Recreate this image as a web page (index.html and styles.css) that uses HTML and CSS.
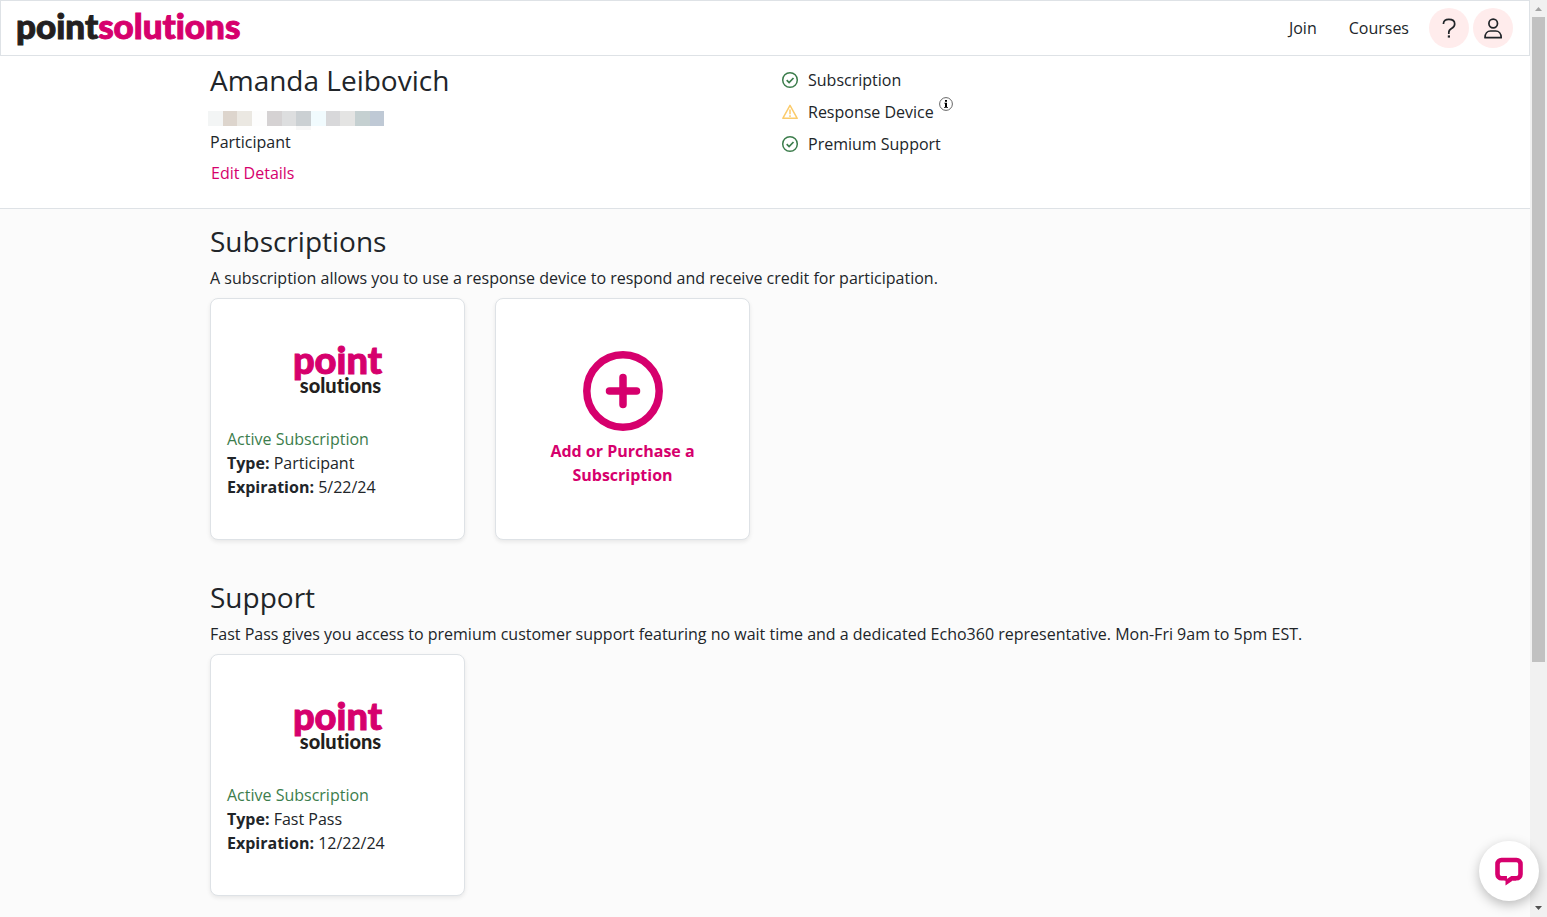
FILE: index.html
```html
<!DOCTYPE html>
<html lang="en">
<head>
<meta charset="utf-8">
<meta name="viewport" content="width=device-width, initial-scale=1">
<title>PointSolutions Account</title>
<link rel="stylesheet" href="styles.css">
</head>
<body>
<div class="page">
  <header class="topbar">
    <a class="brand" href="#"><span>point</span><span class="brand-accent">solutions</span></a>
    <nav class="nav">
      <a class="nav-link" href="#">Join</a>
      <a class="nav-link" href="#">Courses</a>
      <button class="round-btn" type="button" aria-label="Help">
        <svg width="40" height="40" viewBox="0 0 40 40" fill="none" stroke="#212529" stroke-width="1.7"><path d="M14.500 16v-.8c.2-2.500 2-3.900 5.300-3.900 3.500 0 5.900 1.600 5.900 4.600 0 2.200-1.300 3.500-3.200 4.500-1.900 1-2.700 2-2.700 4v1.500"/><path d="M18.800 28.500h2.200" stroke-width="2.200"/></svg>
      </button>
      <button class="round-btn" type="button" aria-label="Account">
        <svg width="40" height="40" viewBox="0 0 40 40" fill="none" stroke="#212529" stroke-width="1.700"><circle cx="20.200" cy="15.500" r="4.300"/><path d="M12 29.700c0-4.300 2.500-6.700 5.500-6.700h5.200c3 0 5.500 2.400 5.500 6.700z" stroke-linejoin="round"/></svg>
      </button>
    </nav>
  </header>

  <section class="profile">
    <div class="container profile-grid">
      <div>
        <h1 class="heading">Amanda Leibovich</h1>
        <div class="redacted">
          <svg width="176" height="25" viewBox="0 0 176 25" shape-rendering="crispEdges" aria-hidden="true">
            <path fill="#f3f5f5" d="M0 6h15v15H0z"/><path fill="#ddd5cd" d="M15 6h14v15H15z"/><path fill="#ebe8e2" d="M29 6h15v15H29z"/><path fill="#fdfdfd" d="M44 6h15v15H44z"/><path fill="#d5d2d3" d="M59 6h15v15H59z"/><path fill="#dddedf" d="M74 6h14v15H74z"/><path fill="#cbd0d3" d="M88 6h15v15H88z"/><path fill="#f1fbfe" d="M103 6h15v15h-15z"/><path fill="#d8d8da" d="M118 6h14v15h-14z"/><path fill="#e4e4e3" d="M132 6h15v15h-15z"/><path fill="#c5d0d1" d="M147 6h15v15h-15z"/><path fill="#bfc9d5" d="M162 6h14v15h-14z"/><path fill="#f7f7f7" d="M88 21h15v4H88z"/>
          </svg>
        </div>
        <p class="text">Participant</p>
        <a class="edit-link" href="#">Edit Details</a>
      </div>
      <ul class="status-list">
        <li class="status">
          <svg class="status-icon" viewBox="0 0 20 20" fill="none" stroke="#3c7d4c" stroke-width="1.500"><circle cx="10" cy="10" r="7.300"/><path d="M6.700 10.200l2.400 2.300 4.400-4.500" stroke-width="1.700"/></svg>
          <span>Subscription</span>
        </li>
        <li class="status">
          <svg class="status-icon" viewBox="0 0 20 20" fill="none" stroke="#fbcb6b" stroke-width="1.500" stroke-linejoin="round"><path d="M10 3.400L17.200 16.300H2.800z"/><path d="M10 7.500v4.700M10 13.300v1.600"/></svg>
          <span>Response Device</span>
          <button class="info" type="button" aria-label="About response devices"><svg width="14" height="14" viewBox="0 0 14 14"><circle cx="7" cy="7" r="6.400" fill="#fff" stroke="#555" stroke-width="0.900"/><path d="M6 3h2v1.700H6zM5.200 5.700H8v4.200h1v.900H5v-.900h1V6.600h-.800z" fill="#000"/></svg></button>
        </li>
        <li class="status">
          <svg class="status-icon" viewBox="0 0 20 20" fill="none" stroke="#3c7d4c" stroke-width="1.500"><circle cx="10" cy="10" r="7.300"/><path d="M6.700 10.200l2.400 2.300 4.400-4.500" stroke-width="1.700"/></svg>
          <span>Premium Support</span>
        </li>
      </ul>
    </div>
  </section>

  <main class="container content">
    <section>
      <h2 class="heading">Subscriptions</h2>
      <p class="text">A subscription allows you to use a response device to respond and receive credit for participation.</p>
      <div class="cards">
        <article class="card">
          <div class="card-logo"><span class="logo-point">point</span><span class="logo-solutions">solutions</span></div>
          <p class="text active">Active Subscription</p>
          <p class="text"><strong>Type:</strong> Participant</p>
          <p class="text"><strong>Expiration:</strong> 5/22/24</p>
        </article>
        <a class="card card-add" href="#">
          <svg width="80" height="80" viewBox="0 0 80 80" fill="none" stroke="#d6006d" stroke-width="7.500" aria-hidden="true"><circle cx="40" cy="40" r="36.200"/><path d="M40 26.500v27M26.500 40h27" stroke-linecap="round"/></svg>
          <span class="add-label">Add or Purchase a Subscription</span>
        </a>
      </div>
    </section>
    <section>
      <h2 class="heading">Support</h2>
      <p class="text">Fast Pass gives you access to premium customer support featuring no wait time and a dedicated Echo360 representative. Mon-Fri 9am to 5pm EST.</p>
      <div class="cards">
        <article class="card">
          <div class="card-logo"><span class="logo-point">point</span><span class="logo-solutions">solutions</span></div>
          <p class="text active">Active Subscription</p>
          <p class="text"><strong>Type:</strong> Fast Pass</p>
          <p class="text"><strong>Expiration:</strong> 12/22/24</p>
        </article>
      </div>
    </section>
  </main>
</div>

<div class="scrollbar" aria-hidden="true">
  <svg class="arrow" viewBox="0 0 17 17"><path d="M5 11h7L8.500 7z" fill="#a3a3a3"/></svg>
  <div class="track"><div class="thumb"></div></div>
  <svg class="arrow" viewBox="0 0 17 17"><path d="M5 6h7l-3.500 4z" fill="#505050"/></svg>
</div>

<button class="chat" type="button" aria-label="Open chat">
  <svg width="30" height="30" viewBox="0 0 30 30" fill="none" stroke="#d6006d" stroke-width="4.600"><path d="M12.800 22.200H7.500a4 4 0 0 1-4-4V8a4 4 0 0 1 4-4h15a4 4 0 0 1 4 4v10.200a4 4 0 0 1-4 4H19"/><path d="M10.500 19.900h2.300v3l4.500-3H22v4.600h-3.200l-7.300 5v-5h-1z" fill="#d6006d" stroke="none"/></svg>
</button>
</body>
</html>
```
FILE: styles.css
```css
* {
  box-sizing: border-box;
}

body {
  margin: 0;
  display: flex;
  min-height: 100vh;
  background: #fbfbfb;
  color: #212529;
  font: 16px/24px "Open Sans", "Noto Sans", sans-serif;
}

h1, h2, p, ul {
  margin: 0;
  padding: 0;
}

a {
  color: inherit;
  text-decoration: none;
}

button {
  border: 0;
  padding: 0;
  cursor: pointer;
}

svg {
  display: block;
}

.page {
  flex: 1;
  min-width: 0;
}

.topbar {
  display: flex;
  align-items: center;
  justify-content: space-between;
  height: 56px;
  padding: 0 16px 0 15px;
  border: 1px solid #dee2e6;
  background: #fff;
}

.brand {
  padding-bottom: 6px;
  font: 900 35px/44px Lato, sans-serif;
  font-variant-ligatures: none;
  -webkit-text-stroke: 1px currentColor;
  color: #231f20;
}

.brand-accent {
  color: #d6006d;
}

.nav {
  display: flex;
  align-items: center;
  gap: 4px;
}

.nav-link {
  padding: 0 16px 0 12px;
}

.round-btn {
  width: 40px;
  height: 40px;
  border-radius: 50%;
  background: #ffecec;
}

.container {
  width: 100%;
  max-width: 1140px;
  margin: 0 auto;
  padding: 0 15px;
}

.profile {
  padding: 8px 0 23px;
  border-bottom: 1px solid #dee2e6;
  background: #fff;
}

.profile-grid {
  display: grid;
  grid-template-columns: 1fr 1fr;
  column-gap: 30px;
}

.heading {
  margin-bottom: 9px;
  font-size: 28px;
  font-weight: 400;
  line-height: 32px;
}

.redacted {
  margin-left: -2px;
}

.edit-link {
  display: inline-block;
  margin-top: 7px;
  padding-left: 1px;
  color: #d6006d;
}

.status-list {
  display: flex;
  flex-direction: column;
  gap: 8px;
  padding-top: 4px;
  list-style: none;
}

.status {
  display: flex;
  align-items: center;
}

.status-icon {
  width: 20px;
  height: 20px;
  margin-right: 8px;
}

.info {
  align-self: flex-start;
  margin: -3px 0 0 5px;
  background: none;
}

.content {
  display: flex;
  flex-direction: column;
  gap: 41px;
  padding-top: 16px;
  padding-bottom: 20px;
}

.cards {
  display: grid;
  grid-template-columns: repeat(auto-fill, minmax(250px, 1fr));
  gap: 30px;
  margin-top: 8px;
}

.card {
  min-height: 242px;
  padding: 44px 16px 40px;
  border: 1px solid #dee2e6;
  border-radius: 8px;
  background: #fff;
  box-shadow: 0 2px 4px rgba(0, 0, 0, 0.08);
}

.card-logo {
  display: flex;
  flex-direction: column;
  align-items: center;
  height: 84px;
  font-family: Lato, sans-serif;
  font-weight: 900;
  font-variant-ligatures: none;
}

.logo-point {
  font-size: 38px;
  line-height: 32px;
  -webkit-text-stroke: 1px currentColor;
  color: #d6006d;
}

.logo-solutions {
  padding-left: 6px;
  font-size: 20px;
  line-height: 20px;
  color: #231f20;
}

.active {
  color: #3c7d4c;
}

.card-add {
  display: flex;
  flex-direction: column;
  align-items: center;
  gap: 8px;
  padding: 52px 40px;
  color: #d6006d;
  font-weight: 700;
  text-align: center;
}

.scrollbar {
  display: flex;
  flex-direction: column;
  flex: none;
  width: 17px;
  background: #f1f1f1;
}

.arrow {
  width: 17px;
  height: 17px;
}

.track {
  flex: 1;
  padding: 0 2px;
}

.thumb {
  height: 73%;
  background: #c1c1c1;
}

.chat {
  position: fixed;
  right: 8px;
  bottom: 16px;
  display: grid;
  place-items: center;
  width: 60px;
  height: 60px;
  border-radius: 50%;
  background: #fff;
  box-shadow: 0 4px 12px rgba(0, 0, 0, 0.25);
}
```
